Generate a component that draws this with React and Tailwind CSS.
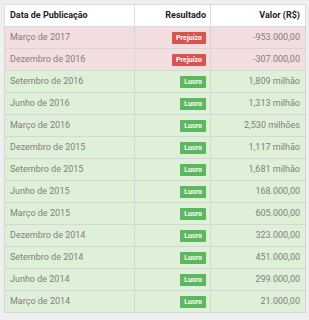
const rows = [
  { date: 'Março de 2017', result: 'Prejuízo', value: '-953.000,00' },
  { date: 'Dezembro de 2016', result: 'Prejuízo', value: '-307.000,00' },
  { date: 'Setembro de 2016', result: 'Lucro', value: '1,809 milhão' },
  { date: 'Junho de 2016', result: 'Lucro', value: '1,313 milhão' },
  { date: 'Março de 2016', result: 'Lucro', value: '2,530 milhões' },
  { date: 'Dezembro de 2015', result: 'Lucro', value: '1,117 milhão' },
  { date: 'Setembro de 2015', result: 'Lucro', value: '1,681 milhão' },
  { date: 'Junho de 2015', result: 'Lucro', value: '168.000,00' },
  { date: 'Março de 2015', result: 'Lucro', value: '605.000,00' },
  { date: 'Dezembro de 2014', result: 'Lucro', value: '323.000,00' },
  { date: 'Setembro de 2014', result: 'Lucro', value: '451.000,00' },
  { date: 'Junho de 2014', result: 'Lucro', value: '299.000,00' },
  { date: 'Março de 2014', result: 'Lucro', value: '21.000,00' },
];

const App = () => {
  return (
    <div className="w-[309px] h-[320px] bg-[#efefef] p-[4px] font-['Roboto',sans-serif]">
      <table className="w-[301px] border-collapse text-[9px] text-[#808080] table-fixed">
        <colgroup>
          <col className="w-[130px]" />
          <col className="w-[76px]" />
          <col className="w-[95px]" />
        </colgroup>
        <thead>
          <tr className="h-[22px] bg-white text-[#222]">
            <th className="border border-[#dcdcdc] px-[5px] text-left font-bold">Data de Publicação</th>
            <th className="border border-[#dcdcdc] px-[4px] text-right font-bold">Resultado</th>
            <th className="border border-[#dcdcdc] px-[5px] text-right font-bold">Valor (R$)</th>
          </tr>
        </thead>
        <tbody>
          {rows.map(r => {
            const loss = r.result === 'Prejuízo';
            return (
              <tr key={r.date} className={`h-[22px] ${loss ? 'bg-[#f2dede]' : 'bg-[#dff0d8]'}`}>
                <td className="border border-[#d6d6d6] px-[5px] whitespace-nowrap">{r.date}</td>
                <td className="border border-[#d6d6d6] px-[4px] text-right leading-none">
                  <span className={`inline-block px-[4px] leading-[12px] text-[7px] font-bold text-white rounded-[1px] align-middle ${loss ? 'bg-[#d9534f]' : 'bg-[#5cb85c]'}`}>
                    {r.result}
                  </span>
                </td>
                <td className="border border-[#d6d6d6] px-[5px] text-right whitespace-nowrap">{r.value}</td>
              </tr>
            );
          })}
        </tbody>
      </table>
    </div>
  );
};

export default App;
